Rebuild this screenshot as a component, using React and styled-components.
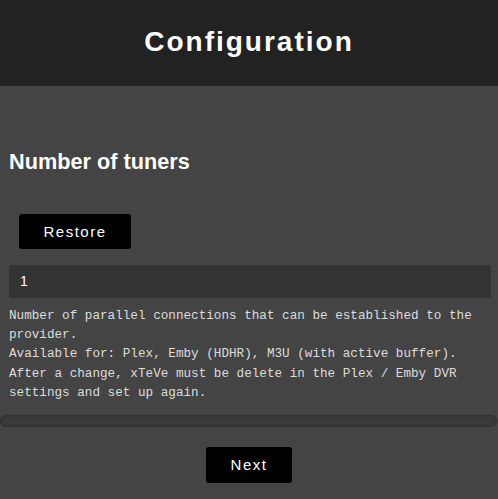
import React from 'react';
import styled, {createGlobalStyle} from 'styled-components';

const GlobalStyle = createGlobalStyle`
  html, body {
    margin: 0;
    padding: 0;
    background: #444444;
  }
  body {
    font-family: "Liberation Sans", Arial, sans-serif;
    color: #fff;
  }
`

const App = () => {
  return (
    <Page>
      <GlobalStyle />
      <Header>
        <Title>Configuration</Title>
      </Header>
      <Content>
        <Heading>Number of tuners</Heading>
        <ButtonRow>
          <Button type="button">Restore</Button>
        </ButtonRow>
        <Input type="text" defaultValue="1" />
        <Description>
          Number of parallel connections that can be established to the provider.
          <br />
          Available for: Plex, Emby (HDHR), M3U (with active buffer).
          <br />
          After a change, xTeVe must be delete in the Plex / Emby DVR settings and set up again.
        </Description>
      </Content>
      <Progress />
      <Footer>
        <Button type="button" $wide={86}>Next</Button>
      </Footer>
    </Page>
  )
}
export default App;

const Page = styled.div`
  width: 100%;
  min-height: 499px;
  background: #444444;
  display: flex;
  flex-direction: column;
`

const Header = styled.header`
  height: 86px;
  background: #222222;
  display: flex;
  align-items: center;
  justify-content: center;
  padding-bottom: 2px;
  box-sizing: border-box;
`

const Title = styled.h1`
  margin: 0;
  font-size: 28px;
  font-weight: bold;
  letter-spacing: 2px;
  color: #fff;
`

const Content = styled.div`
  display: flex;
  flex-direction: column;
  padding: 64px 7px 0 9px;
`

const Heading = styled.h2`
  margin: 0;
  font-size: 21.7px;
  font-weight: bold;
  line-height: 1.149;
  color: #fff;
`

const ButtonRow = styled.div`
  display: flex;
  padding: 39px 0 16px 10px;
`

const Button = styled.button`
  width: ${p => p.$wide || 112}px;
  height: ${p => (p.$wide ? 36 : 35)}px;
  background: #000;
  color: #fff;
  border: none;
  border-radius: 3px;
  font-family: "Liberation Sans", Arial, sans-serif;
  font-size: 15px;
  letter-spacing: 1.5px;
  padding: 0;
  display: flex;
  align-items: center;
  justify-content: center;
`

const Input = styled.input`
  width: 100%;
  height: 33px;
  box-sizing: border-box;
  background: #333333;
  border: none;
  outline: none;
  color: #fff;
  padding: 0 11px;
  font-family: "Liberation Sans", Arial, sans-serif;
  font-size: 14px;
`

const Description = styled.p`
  margin: 8px 0 0;
  font-family: "Liberation Mono", "DejaVu Sans Mono", monospace;
  font-size: 12.65px;
  line-height: 19.2px;
  color: #dddddd;
`

const Progress = styled.div`
  margin: 13px 1px 0 0;
  height: 12px;
  border-radius: 6px;
  background: #3b3b3b;
  box-shadow: inset 0 0 3px #262626;
`

const Footer = styled.div`
  display: flex;
  justify-content: center;
  padding: 20px 0 16px;
`
